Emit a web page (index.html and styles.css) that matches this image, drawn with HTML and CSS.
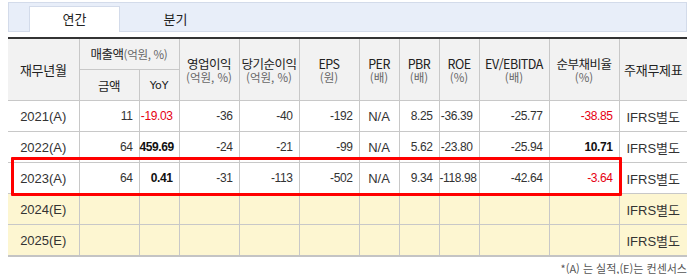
FILE: index.html
```html
<!DOCTYPE html>
<html lang="ko">
<head>
<meta charset="utf-8">
<link rel="stylesheet" href="styles.css">
</head>
<body>
<div class="wrap">
  <div class="tabs">
    <div class="tab active">연간</div>
    <div class="tab">분기</div>
  </div>
  <div class="tablebox">
    <table class="fin">
      <colgroup>
        <col style="width:71px"><col style="width:60px"><col style="width:40px"><col style="width:60px"><col style="width:60px"><col style="width:60px"><col style="width:40px"><col style="width:40px"><col style="width:40px"><col style="width:70px"><col style="width:70px"><col style="width:68px">
      </colgroup>
      <thead>
        <tr>
          <th rowspan="2" class="big">재무년월</th>
          <th colspan="2">매출액<span class="unit-inline">(억원, %)</span></th>
          <th rowspan="2"><span class="ln">영업이익</span><span class="unit">(억원, %)</span></th>
          <th rowspan="2"><span class="ln">당기순이익</span><span class="unit">(억원, %)</span></th>
          <th rowspan="2"><span class="ln">EPS</span><span class="unit">(원)</span></th>
          <th rowspan="2"><span class="ln">PER</span><span class="unit">(배)</span></th>
          <th rowspan="2"><span class="ln">PBR</span><span class="unit">(배)</span></th>
          <th rowspan="2"><span class="ln">ROE</span><span class="unit">(%)</span></th>
          <th rowspan="2"><span class="ln">EV/EBITDA</span><span class="unit">(배)</span></th>
          <th rowspan="2"><span class="ln">순부채비율</span><span class="unit">(%)</span></th>
          <th rowspan="2" class="big">주재무제표</th>
        </tr>
        <tr>
          <th>금액</th>
          <th class="yoy">YoY</th>
        </tr>
      </thead>
      <tbody>
        <tr>
          <td class="yr">2021(A)</td><td>11</td><td class="neg">-19.03</td><td>-36</td><td>-40</td><td>-192</td><td class="na">N/A</td><td>8.25</td><td>-36.39</td><td>-25.77</td><td class="neg">-38.85</td><td class="std">IFRS별도</td>
        </tr>
        <tr>
          <td class="yr">2022(A)</td><td>64</td><td class="b">459.69</td><td>-24</td><td>-21</td><td>-99</td><td class="na">N/A</td><td>5.62</td><td>-23.80</td><td>-25.94</td><td class="b">10.71</td><td class="std">IFRS별도</td>
        </tr>
        <tr>
          <td class="yr">2023(A)</td><td>64</td><td class="b">0.41</td><td>-31</td><td>-113</td><td>-502</td><td class="na">N/A</td><td>9.34</td><td>-118.98</td><td>-42.64</td><td class="neg">-3.64</td><td class="std">IFRS별도</td>
        </tr>
        <tr class="est">
          <td class="yr">2024(E)</td><td></td><td></td><td></td><td></td><td></td><td></td><td></td><td></td><td></td><td></td><td class="std">IFRS별도</td>
        </tr>
        <tr class="est">
          <td class="yr">2025(E)</td><td></td><td></td><td></td><td></td><td></td><td></td><td></td><td></td><td></td><td></td><td class="std">IFRS별도</td>
        </tr>
      </tbody>
    </table>
    <div class="highlight"></div>
  </div>
  <p class="note">*(A) 는 실적,(E)는 컨센서스</p>
</div>
</body>
</html>
```

FILE: styles.css
```css
html, body {
  margin: 0;
  padding: 0;
  background: #fff;
}
body {
  font-family: "Liberation Sans", "Noto Sans CJK KR", sans-serif;
  color: #222;
}
.wrap {
  padding: 2px 7px 0 8px;
}
.tabs {
  display: flex;
  gap: 10px;
  height: 30px;
  padding-left: 20px;
  background: #e8eef9;
  border: 1px solid #d3dbea;
  box-sizing: border-box;
  align-items: flex-end;
}
.tab {
  width: 91px;
  height: 25px;
  line-height: 23px;
  text-align: center;
  font-family: "Noto Sans CJK KR", sans-serif;
  font-size: 13px;
  color: #222;
  box-sizing: border-box;
  margin-bottom: -1px;
}
.tab.active {
  background: #fff;
  border: 1px solid #d3dbea;
  border-bottom: none;
  height: 26px;
}
.tablebox {
  position: relative;
  margin-top: 5px;
}
.fin {
  border-collapse: collapse;
  table-layout: fixed;
  width: 679px;
  border-top: 2px solid #333;
  border-bottom: 2px solid #c4c4c4;
}
.fin th {
  background: #f2f2f2;
  font-weight: normal;
  font-family: "Noto Sans CJK KR", sans-serif;
  font-size: 12.5px;
  letter-spacing: -0.5px;
  line-height: 15px;
  color: #222;
  border: 1px solid #c8c8c8;
  border-top: none;
  height: 30px;
  padding: 0;
  text-align: center;
  vertical-align: middle;
  white-space: nowrap;
}
.fin th .ln {
  display: block;
  line-height: 15px;
}
.fin th .unit {
  display: block;
  font-size: 11.5px;
  line-height: 13px;
  color: #666;
  letter-spacing: 0;
}
.fin th.big { font-size: 13px; letter-spacing: -0.3px; }
.fin th .unit-inline {
  font-size: 11.5px;
  color: #666;
  letter-spacing: -0.3px;
}
.fin th.yoy {
  font-family: "DejaVu Sans", sans-serif;
  font-size: 11px;
  letter-spacing: 0;
}
.fin tr > :first-child { border-left: none; }
.fin tr > :last-child { border-right: none; }
.fin td {
  border: 1px solid #c8c8c8;
  height: 30px;
  padding: 0 6px 0 0;
  text-align: right;
  font-family: "Liberation Sans", sans-serif;
  font-size: 12px;
  letter-spacing: -0.4px;
  color: #333;
  white-space: nowrap;
  overflow: visible;
}
.fin td.yr {
  text-align: center;
  padding: 0;
  font-family: "Liberation Sans", sans-serif;
  font-size: 13px;
  letter-spacing: 0;
}
.fin td.na {
  text-align: center;
  padding: 0;
  font-size: 13px;
  letter-spacing: 0;
}
.fin td.std {
  text-align: center;
  padding: 0;
  font-family: "Liberation Sans", "Noto Sans CJK KR", sans-serif;
  font-size: 13px;
  letter-spacing: 0;
}
.fin td.neg { color: #e60012; }
.fin td.b { font-weight: bold; color: #111; }
.fin tr.est td { background: #fdf6d1; }
.highlight {
  position: absolute;
  left: 3px;
  top: 120px;
  width: 605px;
  height: 33px;
  border: 3px solid #f00;
  border-radius: 1px;
}
.note {
  margin: 5px 0 0;
  text-align: right;
  font-family: "Noto Sans CJK KR", sans-serif;
  font-size: 11px;
  color: #555;
  line-height: 12px;
}
```
